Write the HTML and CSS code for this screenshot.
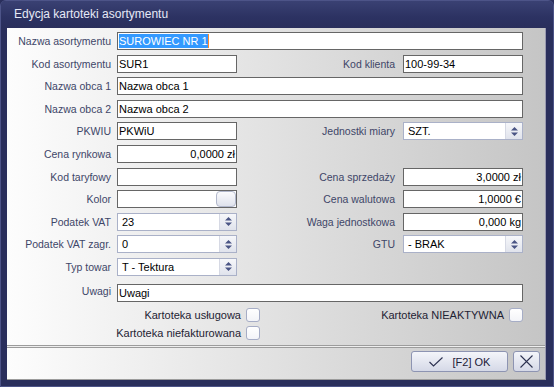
FILE: index.html
```html
<!DOCTYPE html>
<html lang="pl">
<head>
    <meta charset="UTF-8">
    <title>Edycja kartoteki asortymentu</title>
    <link rel="stylesheet" href="styles.css">
</head>
<body>
    <div class="window">
        <div class="titlebar">Edycja kartoteki asortymentu</div>
        <div class="client">
            <div class="form">
                <div class="grid">
                    <span class="lbl">Nazwa asortymentu</span>
                    <div class="field wide"><span class="sel">SUROWIEC NR 1</span><span class="caret"></span></div>

                    <span class="lbl">Kod asortymentu</span>
                    <div class="field">SUR1</div>
                    <span class="lbl2">Kod klienta</span>
                    <div class="field fld2">100-99-34</div>

                    <span class="lbl">Nazwa obca 1</span>
                    <div class="field wide">Nazwa obca 1</div>

                    <span class="lbl">Nazwa obca 2</span>
                    <div class="field wide">Nazwa obca 2</div>

                    <span class="lbl">PKWIU</span>
                    <div class="field">PKWiU</div>
                    <span class="lbl2">Jednostki miary</span>
                    <div class="combo fld2"><span class="combo-val">SZT.</span><span class="spin"></span></div>

                    <span class="lbl">Cena rynkowa</span>
                    <div class="field num">0,0000 zł</div>

                    <span class="lbl">Kod taryfowy</span>
                    <div class="field"></div>
                    <span class="lbl2">Cena sprzedaży</span>
                    <div class="field fld2 num">3,0000 zł</div>

                    <span class="lbl">Kolor</span>
                    <div class="field color"><span class="color-btn"></span></div>
                    <span class="lbl2">Cena walutowa</span>
                    <div class="field fld2 num">1,0000 €</div>

                    <span class="lbl">Podatek VAT</span>
                    <div class="combo"><span class="combo-val">23</span><span class="spin"></span></div>
                    <span class="lbl2">Waga jednostkowa</span>
                    <div class="field fld2 num">0,000 kg</div>

                    <span class="lbl">Podatek VAT zagr.</span>
                    <div class="combo"><span class="combo-val">0</span><span class="spin"></span></div>
                    <span class="lbl2">GTU</span>
                    <div class="combo fld2"><span class="combo-val">- BRAK</span><span class="spin"></span></div>

                    <span class="lbl">Typ towar</span>
                    <div class="combo"><span class="combo-val">T - Tektura</span><span class="spin"></span></div>

                    <span class="lbl notes">Uwagi</span>
                    <div class="field wide notes">Uwagi</div>
                </div>

                <div class="checks">
                    <label class="check">Kartoteka usługowa <span class="box"></span></label>
                    <label class="check">Kartoteka NIEAKTYWNA <span class="box"></span></label>
                    <label class="check">Kartoteka niefakturowana <span class="box"></span></label>
                </div>
            </div>

            <div class="footer">
                <button class="btn btn-ok">
                    <svg width="14" height="10" viewBox="0 0 14 10"><polyline points="0.5,5 4.5,9 13.5,0.5" fill="none" stroke="#2c3150" stroke-width="1.1"/></svg>
                    [F2] OK
                </button>
                <button class="btn btn-close">
                    <svg width="13" height="13" viewBox="0 0 13 13"><path d="M0.5 0.5 L12.5 12.5 M12.5 0.5 L0.5 12.5" stroke="#2c3150" stroke-width="1.1"/></svg>
                </button>
            </div>
        </div>
    </div>
</body>
</html>
```

FILE: styles.css
```css
body {
    margin: 0;
    background: #2a2f5c;
    font-family: "Liberation Sans", Arial, sans-serif;
    font-size: 11px;
}

.window {
    width: 554px;
    height: 387px;
    box-sizing: border-box;
    background: #2a2f5c;
    border: 1px solid #4d5488;
    border-radius: 6px 6px 0 0;
    padding: 0 7px 6px 6px;
    display: flex;
    flex-direction: column;
}

.titlebar {
    height: 27px;
    line-height: 27px;
    color: #e6e9f6;
    font-size: 12px;
    background: linear-gradient(#3a4173, #2c3262 60%, #2a2f5c);
    margin: 0 -7px 0 -6px;
    padding-left: 13px;
    border-radius: 5px 5px 0 0;
}

.client {
    flex: 1;
    display: flex;
    flex-direction: column;
    background: #eeeeee;
    border-right: 1px solid #9a9ab0;
}

.form {
    height: 318px;
    padding-top: 4px;
    box-sizing: border-box;
    background: linear-gradient(to right, #fdfdfd, #c5c5c5);
    border-bottom: 1px solid #9c9c9c;
}

.grid {
    display: grid;
    grid-template-columns: 110px 120px 166px 120px;
    grid-auto-rows: 18px;
    row-gap: 4.6px;
}

.lbl, .lbl2 {
    color: #3e4668;
    font-size: 10.5px;
    text-align: right;
    align-self: center;
    white-space: nowrap;
}

.lbl {
    grid-column: 1;
    padding-right: 6px;
}

.lbl2 {
    grid-column: 3;
    padding-right: 8px;
}

.field, .combo {
    grid-column: 2;
    box-sizing: border-box;
    height: 18px;
    background: #fff;
    color: #000;
    white-space: nowrap;
    display: flex;
    align-items: center;
}

.field {
    border: 1px solid #666666;
    padding: 0 1px;
}

.fld2 {
    grid-column: 4;
}

.wide {
    grid-column: 2 / 5;
}

.num {
    justify-content: flex-end;
}

.notes {
    margin-top: 3px;
}

.sel {
    background: #3399ff;
    color: #fff;
    line-height: 14px;
}

.caret {
    width: 1px;
    height: 14px;
    background: #ff8a2a;
}

.color {
    justify-content: flex-end;
    padding: 0;
}

.color-btn {
    width: 20px;
    height: 16px;
    box-sizing: border-box;
    border: 1px solid #b2b8cc;
    border-radius: 4px;
    background: linear-gradient(#fbfbfd, #dfe2ec);
}

.combo {
    border: 1px solid #aab1c8;
    padding-left: 4px;
}

.combo-val {
    flex: 1;
}

.spin {
    width: 16px;
    height: 16px;
    border-left: 1px solid #d6d9e4;
    background-image:
        url("data:image/svg+xml;utf8,<svg xmlns='http://www.w3.org/2000/svg' width='7' height='9'><path d='M0 3.5 L3.5 0 L7 3.5Z M0 5.5 L3.5 9 L7 5.5Z' fill='%234a5585'/></svg>"),
        linear-gradient(#f6f7fa, #e0e3ec);
    background-repeat: no-repeat;
    background-position: center, 0 0;
}

.checks {
    display: grid;
    grid-template-columns: 253px 263px;
    grid-auto-rows: 14px;
    row-gap: 4px;
    margin-top: 9px;
}

.check {
    display: flex;
    justify-content: flex-end;
    align-items: center;
    gap: 5px;
    color: #1e2233;
    white-space: nowrap;
}

.box {
    width: 14px;
    height: 14px;
    box-sizing: border-box;
    border: 1px solid #a6adc6;
    border-radius: 3px;
    background: linear-gradient(#ffffff, #f3f4f8);
}

.footer {
    flex: 1;
    margin-top: 1px;
    border-top: 1px solid #9c9c9c;
    border-bottom: 1px solid #9c9c9c;
    background: linear-gradient(to right, #fdfdfd, #c5c5c5);
    display: flex;
    justify-content: flex-end;
    align-items: flex-start;
    gap: 5px;
    padding: 3px 5px 0 0;
}

.btn {
    height: 21px;
    box-sizing: border-box;
    border: 1px solid #8d94b2;
    border-radius: 3px;
    background: linear-gradient(#f4f5fa, #d5d9e7);
    color: #1c2038;
    font-family: "Liberation Sans", Arial, sans-serif;
    font-size: 11px;
    display: flex;
    align-items: center;
    justify-content: center;
    padding: 0;
}

.btn-ok {
    width: 97px;
    gap: 10px;
}

.btn-close {
    width: 27px;
}
```
